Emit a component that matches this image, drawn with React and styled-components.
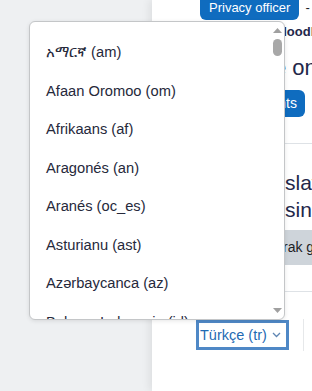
import React from 'react';
import styled, { createGlobalStyle } from 'styled-components';

const GlobalStyle = createGlobalStyle`
  html, body {
    margin: 0;
    padding: 0;
    background: #eef0f2;
    font-family: "Liberation Sans", Arial, sans-serif;
    overflow: hidden;
  }
`;

const Page = styled.div`
  position: relative;
  display: flex;
  width: 312px;
  height: 391px;
  overflow: hidden;
`;

const Side = styled.div`
  width: 152px;
  flex-shrink: 0;
  background: #eef0f2;
`;

const Panel = styled.div`
  flex: 1;
  min-width: 0;
  background: #fff;
  box-shadow: -3px 0 8px rgba(0, 0, 0, 0.07);
  overflow: hidden;
  display: flex;
  flex-direction: column;
  color: #23284a;
`;

const TopRow = styled.div`
  display: flex;
  align-items: flex-start;
  gap: 6px;
  padding-left: 48px;
`;

const PrivacyButton = styled.div`
  background: #0f6cbf;
  color: #fff;
  font-size: 13px;
  line-height: 15px;
  padding: 0 9px 5px;
  border-radius: 0 0 6px 6px;
  white-space: nowrap;
`;

const Dash = styled.span`
  font-size: 13px;
  line-height: 15px;
  color: #1d2125;
`;

const Line = styled.div`
  margin-top: ${p => p.$top}px;
  padding-left: ${p => p.$indent}px;
  font-size: ${p => p.$size}px;
  line-height: ${p => p.$lh}px;
  font-weight: ${p => (p.$bold ? 700 : 400)};
  white-space: nowrap;
`;

const ButtonRow = styled.div`
  display: flex;
  justify-content: flex-end;
  padding-right: 7px;
  margin-top: 7px;
`;

const BlueButton = styled.div`
  background: #0f6cbf;
  color: #fff;
  font-size: 14px;
  height: 27px;
  line-height: 27px;
  padding: 0 8px;
  border-radius: 6px;
  white-space: nowrap;
`;

const Divider = styled.div`
  height: 1px;
  background: #dee2e6;
  margin-top: ${p => p.$top}px;
  flex-shrink: 0;
`;

const GuestBar = styled.div`
  margin-top: 7px;
  height: 35px;
  line-height: 35px;
  background: #ced4da;
  color: #1d2125;
  font-size: 14px;
  padding-left: 131px;
  white-space: nowrap;
`;

const LangRow = styled.div`
  display: flex;
  align-items: center;
  margin-top: 27px;
  padding-left: 44px;
`;

const LangSelect = styled.div`
  box-sizing: border-box;
  width: 93px;
  height: 30px;
  border: 3px solid #4f88c6;
  display: flex;
  align-items: center;
  justify-content: space-between;
  padding: 0 5px 0 1px;
  background: #fff;
  color: #1f6bb3;
  font-size: 14.5px;
  white-space: nowrap;
`;

const VRule = styled.div`
  width: 1px;
  height: 32px;
  margin-left: 14px;
  background: #e6e8ea;
`;

const Dropdown = styled.div`
  position: absolute;
  left: 29px;
  top: 21px;
  width: 256px;
  height: 299px;
  box-sizing: border-box;
  background: #fff;
  border: 1px solid #c4c6c8;
  border-radius: 6px;
  box-shadow: 0 1px 4px rgba(0, 0, 0, 0.1);
  overflow: hidden;
`;

const OptionList = styled.ul`
  list-style: none;
  margin: 0;
  padding: 11px 0 0;
`;

const Option = styled.li`
  padding-left: 16px;
  font-size: 14.7px;
  line-height: 38.5px;
  color: #26293b;
  white-space: nowrap;
  font-family: "Liberation Sans", "Noto Sans", "DejaVu Sans", sans-serif;
`;

const Scrollbar = styled.div`
  position: absolute;
  top: 0;
  right: 2px;
  bottom: 0;
  width: 10px;
  display: flex;
  flex-direction: column;
  align-items: center;
  padding: 6px 0 6px;
  box-sizing: border-box;
`;

const Thumb = styled.div`
  width: 9px;
  height: 17px;
  border-radius: 5px;
  background: #a8a8a8;
  margin-top: 6px;
`;

const Spacer = styled.div`
  flex: 1;
`;

const Arrow = ({ down }) => (
  <svg width="9" height="5" viewBox="0 0 9 5">
    <path d={down ? 'M0 0 H9 L4.5 5 Z' : 'M0 5 H9 L4.5 0 Z'} fill="#a0a0a0" />
  </svg>
);

const Chevron = () => (
  <svg width="9" height="6" viewBox="0 0 9 6">
    <path d="M1 1 L4.5 4.5 L8 1" fill="none" stroke="#5f86b3" strokeWidth="1.3" />
  </svg>
);

const languages = [
  'አማርኛ (am)',
  'Afaan Oromoo (om)',
  'Afrikaans (af)',
  'Aragonés (an)',
  'Aranés (oc_es)',
  'Asturianu (ast)',
  'Azərbaycanca (az)',
  'Bahasa Indonesia (id)',
];

export default function App() {
  return (
    <>
      <GlobalStyle />
      <Page>
        <Side />
        <Panel>
          <TopRow>
            <PrivacyButton>Privacy officer</PrivacyButton>
            <Dash>-</Dash>
          </TopRow>
          <Line $top={4} $indent={124} $size={13} $lh={16} $bold>
            Moodle
          </Line>
          <Line $top={13} $indent={122} $size={22} $lh={30}>
            e online
          </Line>
          <ButtonRow>
            <BlueButton>Agreements</BlueButton>
          </ButtonRow>
          <Divider $top={26} />
          <Line $top={25} $indent={133} $size={21} $lh={27}>
            slayın
          </Line>
          <Line $top={0} $indent={133} $size={21} $lh={27}>
            siniz
          </Line>
          <GuestBar>rak giriş yap</GuestBar>
          <Divider $top={26} />
          <LangRow>
            <LangSelect>
              Türkçe (tr)
              <Chevron />
            </LangSelect>
            <VRule />
          </LangRow>
        </Panel>
        <Dropdown>
          <OptionList>
            {languages.map(l => (
              <Option key={l}>{l}</Option>
            ))}
          </OptionList>
          <Scrollbar>
            <Arrow />
            <Thumb />
            <Spacer />
            <Arrow down />
          </Scrollbar>
        </Dropdown>
      </Page>
    </>
  );
}
